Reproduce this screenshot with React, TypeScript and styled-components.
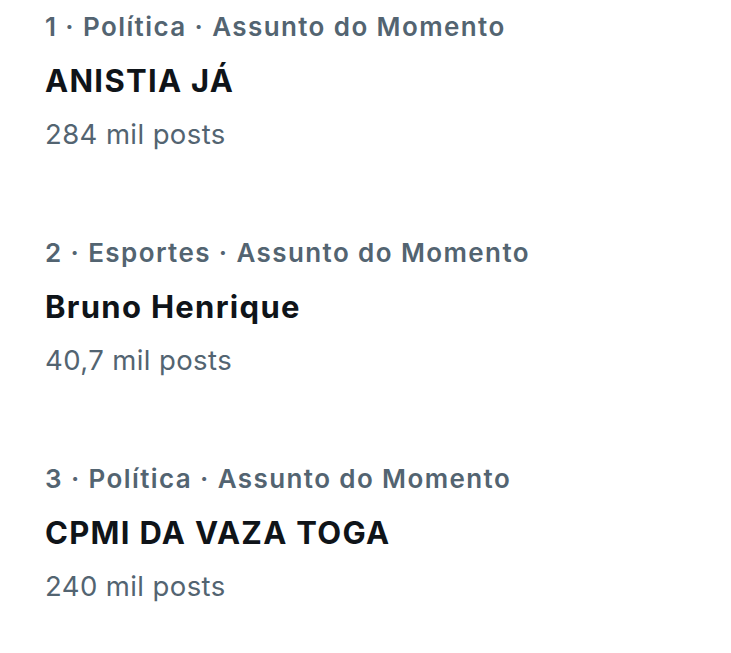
import React from 'react';
import styled, { createGlobalStyle } from 'styled-components';

const GlobalStyle = createGlobalStyle`
  html, body {
    margin: 0;
    padding: 0;
    background: #ffffff;
  }
  body {
    font-family: Inter, Roboto, "Noto Sans", "Liberation Sans", sans-serif;
    -webkit-font-smoothing: antialiased;
  }
`;

type Trend = {
  rank: number;
  category: string;
  title: string;
  posts: string;
};

const trends: Trend[] = [
  { rank: 1, category: 'Política', title: 'ANISTIA JÁ', posts: '284 mil posts' },
  { rank: 2, category: 'Esportes', title: 'Bruno Henrique', posts: '40,7 mil posts' },
  { rank: 3, category: 'Política', title: 'CPMI DA VAZA TOGA', posts: '240 mil posts' },
];

const List = styled.div`
  display: flex;
  flex-direction: column;
  gap: 85px;
  padding: 11px 0 0 45px;
`;

const Item = styled.div`
  display: flex;
  flex-direction: column;
`;

const Context = styled.div`
  font-size: 26px;
  line-height: 32px;
  font-weight: 600;
  letter-spacing: 1.4px;
  color: #536471;
  white-space: nowrap;
`;

const Title = styled.div`
  margin-top: 18px;
  font-size: 31px;
  line-height: 40px;
  font-weight: 700;
  letter-spacing: 1.3px;
  color: #0f1419;
  white-space: nowrap;
`;

const Count = styled.div`
  margin-top: 15px;
  font-size: 27.5px;
  line-height: 36px;
  font-weight: 400;
  letter-spacing: 0.4px;
  color: #536471;
  white-space: nowrap;
`;

const TrendItem = ({ trend }: { trend: Trend }) => (
  <Item>
    <Context>
      {trend.rank} · {trend.category} · Assunto do Momento
    </Context>
    <Title>{trend.title}</Title>
    <Count>{trend.posts}</Count>
  </Item>
);

export default function App() {
  return (
    <>
      <GlobalStyle />
      <List>
        {trends.map((t) => (
          <TrendItem key={t.rank} trend={t} />
        ))}
      </List>
    </>
  );
}
